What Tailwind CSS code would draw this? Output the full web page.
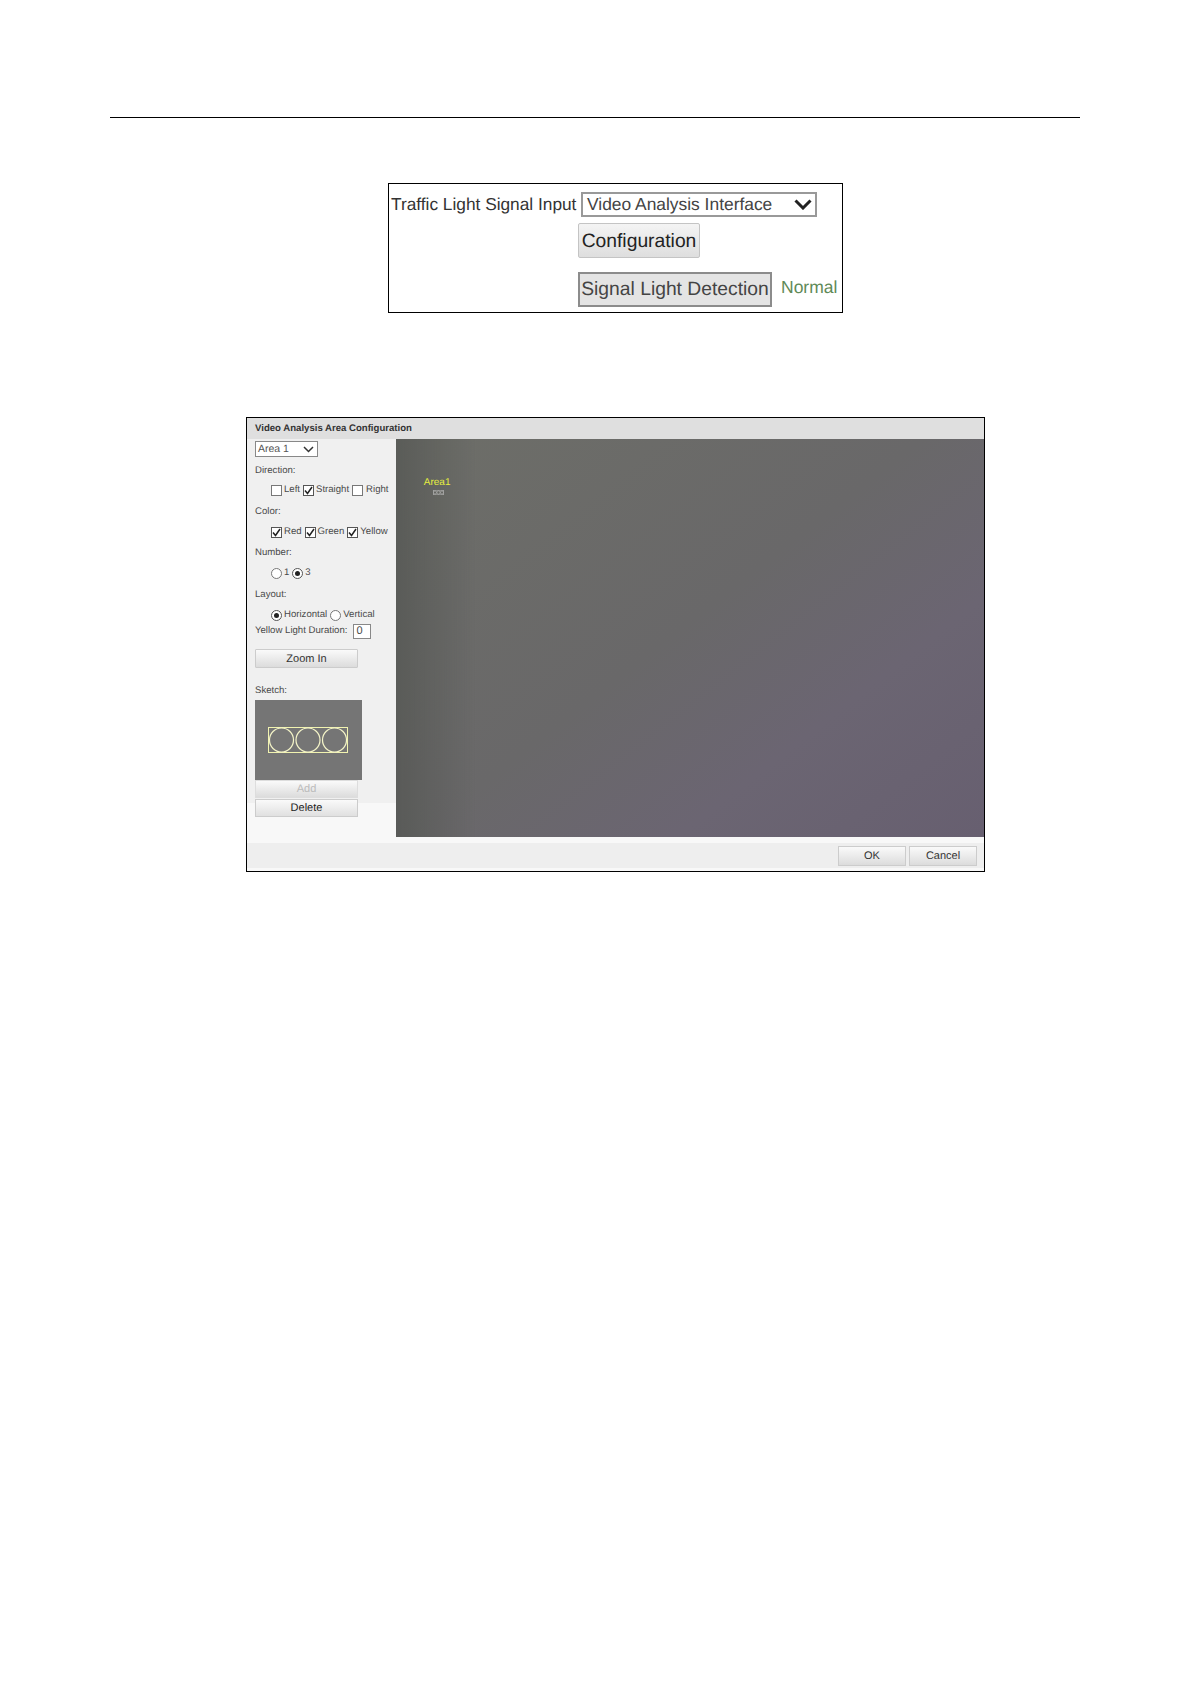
<!DOCTYPE html>
<html lang="en">
<head>
  <meta charset="UTF-8">
  <title>Video Analysis Area Configuration</title>
  <script src="https://cdn.jsdelivr.net/npm/@tailwindcss/browser@4"></script>
</head>
<body class="bg-white font-['Liberation_Sans',Arial,sans-serif] [text-rendering:geometricPrecision] h-[1684px] overflow-hidden">

  <!-- page header rule -->
  <div class="ml-[110px] mt-[117px] w-[970px] h-[1px] bg-black"></div>

  <!-- traffic light signal input -->
  <div class="ml-[388px] mt-[65px] w-[455px] h-[130px] border border-black pt-[8px]">
    <div class="flex items-center h-[25px]">
      <span class="ml-[2px] mt-[1px] w-[187px] text-[17.3px] leading-none text-[#333] whitespace-nowrap">Traffic Light Signal Input</span>
      <div class="ml-[3px] w-[236px] h-[25px] border-2 border-[#999] flex items-center justify-between pl-[4px] pr-[3px] text-[17.4px] text-[#444]">
        <span class="whitespace-nowrap">Video Analysis Interface</span>
        <svg width="18" height="11" viewBox="0 0 18 11"><path d="M1.5 1.5 L9 9 L16.5 1.5" fill="none" stroke="#222" stroke-width="3"/></svg>
      </div>
    </div>
    <div class="ml-[189px] mt-[6px] pt-[3px] w-[122px] h-[35px] rounded-[2px] border border-[#c4c4c4] bg-gradient-to-b from-[#f4f4f4] to-[#dedede] flex items-center justify-center text-[19.3px] text-[#222]">Configuration</div>
    <div class="flex items-center ml-[189px] mt-[14px]">
      <div class="w-[194px] h-[35px] pt-[1px] border-2 border-[#8c8c8c] bg-[#e4e4e4] flex items-center justify-center text-[19.3px] text-[#444] whitespace-nowrap">Signal Light Detection</div>
      <span class="ml-[9px] -mt-[4px] text-[17.5px] text-[#5f8a58]">Normal</span>
    </div>
  </div>

  <!-- area configuration dialog -->
  <div class="ml-[246px] mt-[104px] w-[739px] h-[455px] border border-black bg-[#f8f8f8] flex flex-col">
    <div class="h-[21px] pt-[1px] bg-[#dfdfdf] flex items-center pl-[8px] text-[9.6px] font-bold text-[#333] whitespace-nowrap">Video Analysis Area Configuration</div>
    <div class="flex h-[398px]">
      <div class="w-[149px] pl-[8px] text-[9.6px] text-[#4a4a4a] bg-[linear-gradient(#f0f0f0_0,#f0f0f0_364px,#f8f8f8_364px)]">
        <div class="mt-[2px] w-[63px] h-[16px] border border-[#888] bg-white flex items-center justify-between pl-[2px] pr-[3px] text-[10.5px] text-[#555]">
          <span class="pt-[1px]">Area 1</span>
          <svg width="11" height="7" viewBox="0 0 11 7"><path d="M1 1 L5.5 5.5 L10 1" fill="none" stroke="#333" stroke-width="1.5"/></svg>
        </div>
        <div class="mt-[6px] pt-[1px] h-[14px] leading-[14px]">Direction:</div>
        <div class="mt-[5px] ml-[16px] h-[16px] flex items-center gap-[2px] whitespace-nowrap">
          <span class="w-[11px] h-[11px] border border-[#777] bg-white"></span><span>Left</span>
          <span class="w-[11px] h-[11px] border border-[#555] bg-white flex items-center justify-center ml-[1px]"><svg width="9" height="9" viewBox="0 0 9 9"><path d="M1 4.5 L3.5 7.5 L8 1" fill="none" stroke="#222" stroke-width="1.5"/></svg></span><span>Straight</span>
          <span class="w-[11px] h-[11px] border border-[#777] bg-white ml-[1px]"></span><span class="ml-[1px]">Right</span>
        </div>
        <div class="mt-[6px] pt-[1px] h-[14px] leading-[14px]">Color:</div>
        <div class="mt-[6px] ml-[16px] h-[16px] flex items-center gap-[2px] whitespace-nowrap">
          <span class="w-[11px] h-[11px] border border-[#555] bg-white flex items-center justify-center"><svg width="9" height="9" viewBox="0 0 9 9"><path d="M1 4.5 L3.5 7.5 L8 1" fill="none" stroke="#222" stroke-width="1.5"/></svg></span><span>Red</span>
          <span class="w-[11px] h-[11px] border border-[#555] bg-white flex items-center justify-center ml-[1px]"><svg width="9" height="9" viewBox="0 0 9 9"><path d="M1 4.5 L3.5 7.5 L8 1" fill="none" stroke="#222" stroke-width="1.5"/></svg></span><span>Green</span>
          <span class="w-[11px] h-[11px] border border-[#555] bg-white flex items-center justify-center ml-[1px]"><svg width="9" height="9" viewBox="0 0 9 9"><path d="M1 4.5 L3.5 7.5 L8 1" fill="none" stroke="#222" stroke-width="1.5"/></svg></span><span>Yellow</span>
        </div>
        <div class="mt-[5px] pt-[1px] h-[14px] leading-[14px]">Number:</div>
        <div class="mt-[6px] ml-[16px] h-[16px] flex items-center gap-[2px] whitespace-nowrap">
          <span class="w-[11px] h-[11px] rounded-full border border-[#777] bg-white"></span><span>1</span>
          <span class="w-[11px] h-[11px] rounded-full border border-[#555] bg-white flex items-center justify-center ml-[1px]"><span class="w-[5px] h-[5px] rounded-full bg-[#222]"></span></span><span>3</span>
        </div>
        <div class="mt-[6px] pt-[1px] h-[14px] leading-[14px]">Layout:</div>
        <div class="mt-[6px] ml-[16px] h-[16px] flex items-center gap-[2px] whitespace-nowrap">
          <span class="w-[11px] h-[11px] rounded-full border border-[#555] bg-white flex items-center justify-center"><span class="w-[5px] h-[5px] rounded-full bg-[#222]"></span></span><span>Horizontal</span>
          <span class="w-[11px] h-[11px] rounded-full border border-[#777] bg-white ml-[1px]"></span><span>Vertical</span>
        </div>
        <div class="mt-[1px] h-[15px] flex items-center whitespace-nowrap">
          <span>Yellow Light Duration:</span>
          <span class="ml-[6px] w-[18px] h-[15px] border border-[#888] bg-white pl-[2px] text-[11px] leading-[13px]">0</span>
        </div>
        <div class="mt-[10px] pt-[1px] w-[103px] h-[19px] rounded-[1px] border border-[#ccc] bg-gradient-to-b from-[#fafafa] to-[#dcdcdc] flex items-center justify-center text-[11px] text-[#333]">Zoom In</div>
        <div class="mt-[15px] pt-[1px] h-[14px] leading-[14px]">Sketch:</div>
        <div class="mt-[3px] w-[107px] h-[80px] bg-[#757575] flex items-center justify-center">
          <svg width="80" height="26" viewBox="0 0 80 26" class="-ml-[1px]">
            <rect x="0.5" y="0.5" width="79" height="25" fill="none" stroke="#f1f3b0" stroke-width="1"/>
            <circle cx="13.5" cy="13" r="12" fill="none" stroke="#f4f4c8" stroke-width="1.2"/>
            <circle cx="40" cy="13" r="12" fill="none" stroke="#f4f4c8" stroke-width="1.2"/>
            <circle cx="66.5" cy="13" r="12" fill="none" stroke="#f4f4c8" stroke-width="1.2"/>
          </svg>
        </div>
        <div class="pt-[1px] w-[103px] h-[18px] border border-[#ddd] bg-gradient-to-b from-[#fafafa] to-[#dcdcdc] flex items-center justify-center text-[11px] text-[#bbb]">Add</div>
        <div class="mt-[1px] pt-[1px] w-[103px] h-[18px] border border-[#ccc] bg-gradient-to-b from-[#fafafa] to-[#e0e0e0] flex items-center justify-center text-[11px] text-[#222]">Delete</div>
      </div>
      <div class="w-[589px] relative bg-[linear-gradient(90deg,#545653c0_0,#54565300_80px),linear-gradient(142deg,#6d6e68_0%,#696869_48%,#6b6572_72%,#675f70_100%)]">
        <div class="absolute left-[28px] top-[38px] text-[10px] leading-[12px] text-[#e6ee40]">Area1</div>
        <svg width="11" height="5" viewBox="0 0 11 5" class="absolute left-[37px] top-[51px]">
          <rect x="0.25" y="0.25" width="10.5" height="4.5" fill="none" stroke="#b5b5b5" stroke-width="0.5"/>
          <circle cx="2" cy="2.5" r="1.6" fill="none" stroke="#c8c8c8" stroke-width="0.5"/>
          <circle cx="5.5" cy="2.5" r="1.6" fill="none" stroke="#c8c8c8" stroke-width="0.5"/>
          <circle cx="9" cy="2.5" r="1.6" fill="none" stroke="#c8c8c8" stroke-width="0.5"/>
        </svg>
      </div>
    </div>
    <div class="mt-[6px] h-[25px] bg-[#eeeeee] flex items-center justify-end pr-[7px] gap-[3px] text-[11px] text-[#333]">
      <div class="pt-[1px] w-[68px] h-[20px] border border-[#ccc] bg-gradient-to-b from-[#fafafa] to-[#dcdcdc] flex items-center justify-center">OK</div>
      <div class="pt-[1px] w-[68px] h-[20px] border border-[#ccc] bg-gradient-to-b from-[#fafafa] to-[#dcdcdc] flex items-center justify-center">Cancel</div>
    </div>
  </div>

</body>
</html>
